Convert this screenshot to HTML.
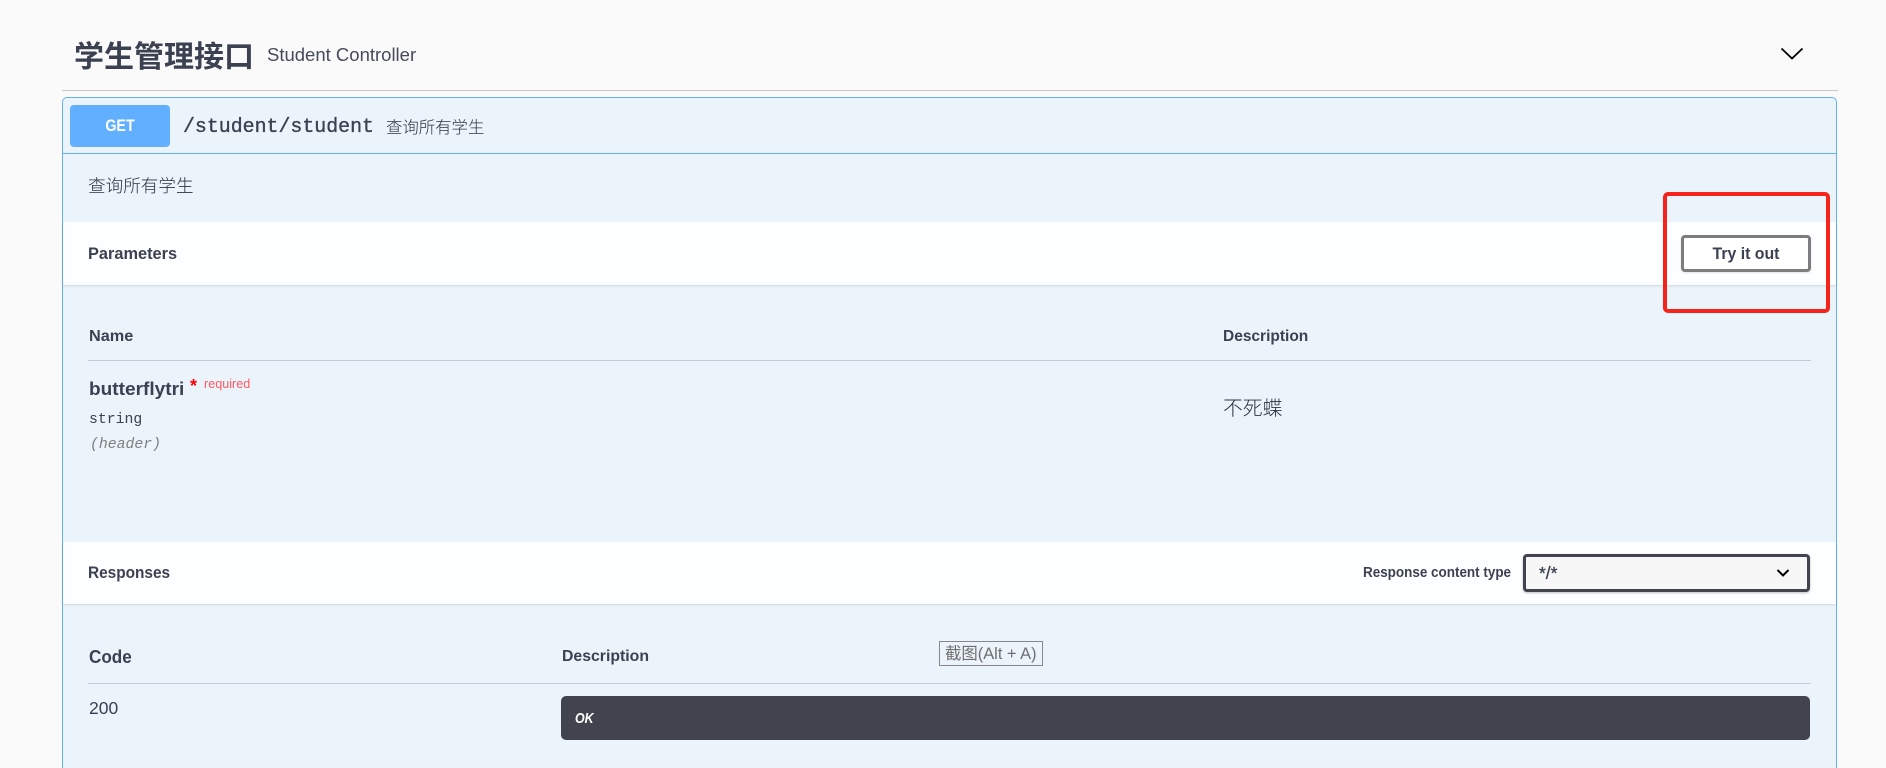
<!DOCTYPE html>
<html lang="zh">
<head>
<meta charset="utf-8">
<title>Swagger</title>
<style>
html,body{margin:0;padding:0;width:1886px;height:768px;overflow:hidden;background:#fafafa;}
body{position:relative;font-family:"Liberation Sans","Noto Sans CJK SC",sans-serif;color:#3b4151;}
.a{position:absolute;box-sizing:border-box;}
.t{position:absolute;white-space:nowrap;line-height:24px;height:24px;transform-origin:left center;}
.b{font-weight:700;}
.m{font-family:"Liberation Mono","Noto Sans CJK SC",monospace;}
.cjk{font-family:"Noto Sans CJK SC","Liberation Sans",sans-serif;}
</style>
</head>
<body>
<div class="t cjk b" style="left:74px;top:42px;font-size:30px;line-height:24px;">学生管理接口</div>
<div class="t" style="left:267px;top:43px;font-size:18.5px;transform:scaleX(1.0);color:#454b5a;">Student Controller</div>
<svg class="a" style="left:1779px;top:44px;" width="26" height="20" viewBox="0 0 26 20"><path d="M2.5 4.5 L13 14.5 L23.5 4.5" fill="none" stroke="#000" stroke-width="1.8"/></svg>
<div class="a" style="left:62px;top:90px;width:1776px;height:1px;background:#c9c9c9;"></div>

<div class="a" style="left:62px;top:97px;width:1775px;height:690px;background:#ebf3fb;border:1.5px solid #61affe;border-radius:5px;"></div>
<div class="a" style="left:70px;top:105px;width:100px;height:42px;background:#61affe;border-radius:4px;"></div>
<div class="t b" style="left:70px;top:114px;width:100px;text-align:center;font-size:17px;color:#fff;transform-origin:center;transform:scaleX(.84);">GET</div>
<div class="t m" style="left:183px;top:115px;font-size:19.9px;font-weight:400;-webkit-text-stroke:.35px #3b4151;">/student/student</div>
<div class="t cjk" style="left:386px;top:114px;font-size:16.4px;font-weight:300;color:#2c3140;">查询所有学生</div>
<div class="a" style="left:63px;top:153px;width:1773px;height:1px;background:#61affe;"></div>

<div class="t cjk" style="left:88px;top:174px;font-size:17.6px;font-weight:300;color:#2c3140;">查询所有学生</div>

<div class="a" style="left:63px;top:222px;width:1773px;height:63px;background:#fdfeff;box-shadow:0 1px 2px rgba(0,0,0,.12);"></div>
<div class="t b" style="left:88px;top:242px;font-size:16.2px;transform:scaleX(1.01);">Parameters</div>
<div class="a" style="left:1681px;top:235px;width:130px;height:37px;border:3px solid #7d7d7d;border-radius:4px;background:#fff;box-shadow:0 1px 2px rgba(0,0,0,.1);"></div>
<div class="t b" style="left:1681px;top:242px;width:130px;text-align:center;font-size:16.5px;transform-origin:center;transform:scaleX(.96);">Try it out</div>
<div class="a" style="left:1663px;top:192px;width:167px;height:121px;border:4px solid #f5231a;border-radius:5px;"></div>

<div class="t b" style="left:89px;top:325px;font-size:15.5px;transform:scaleX(1.05);">Name</div>
<div class="t b" style="left:1223px;top:325px;font-size:15.5px;">Description</div>
<div class="a" style="left:88px;top:360px;width:1723px;height:1px;background:#c3cbdb;"></div>
<div class="t b" style="left:89px;top:377px;font-size:18.5px;transform:scaleX(1.03);">butterflytri</div>
<div class="t b" style="left:190px;top:374px;font-size:18px;color:#f00;">*</div>
<div class="t" style="left:204px;top:372px;font-size:12.6px;color:#ff5a5f;">required</div>
<div class="t m" style="left:89px;top:408px;font-size:14.8px;">string</div>
<div class="t m" style="left:90px;top:433px;font-size:14.8px;font-style:italic;color:#808080;">(header)</div>
<div class="t cjk" style="left:1223px;top:395px;font-size:19.8px;font-weight:300;color:#2c3140;">不死蝶</div>

<div class="a" style="left:63px;top:542px;width:1773px;height:62px;background:#fdfeff;box-shadow:0 1px 2px rgba(0,0,0,.12);"></div>
<div class="t b" style="left:88px;top:561px;font-size:16.2px;transform:scaleX(.95);">Responses</div>
<div class="t b" style="left:1363px;top:561px;font-size:14.4px;transform:scaleX(.935);">Response content type</div>
<div class="a" style="left:1523px;top:554px;width:287px;height:38px;background:#f7f7f7;border:3px solid #41444e;border-radius:4px;box-shadow:0 1px 2px rgba(0,0,0,.25);"></div>
<div class="t" style="left:1539px;top:561px;font-size:17.5px;font-weight:400;-webkit-text-stroke:.3px #3b4151;">*/*</div>
<svg class="a" style="left:1775px;top:566px;" width="16" height="14" viewBox="0 0 16 14"><path d="M2.5 4 L8 9.5 L13.5 4" fill="none" stroke="#000" stroke-width="2"/></svg>

<div class="t b" style="left:89px;top:645px;font-size:18.6px;transform:scaleX(.92);">Code</div>
<div class="t b" style="left:562px;top:645px;font-size:15.5px;transform:scaleX(1.02);">Description</div>
<div class="a" style="left:88px;top:683px;width:1723px;height:1px;background:#c3cbdb;"></div>
<div class="t" style="left:89px;top:696px;font-size:17.5px;">200</div>
<div class="a" style="left:561px;top:696px;width:1249px;height:44px;background:#41444e;border-radius:5px;"></div>
<div class="t b" style="left:575px;top:707px;font-size:14.8px;font-style:italic;color:#fff;transform:scaleX(.84);">OK</div>

<div class="a" style="left:939px;top:641px;width:104px;height:25px;border:1px solid #888;background:#ebf3fb;"></div>
<div class="t" style="left:945px;top:642px;font-size:16.4px;color:#707070;">截图(Alt + A)</div>
</body>
</html>
